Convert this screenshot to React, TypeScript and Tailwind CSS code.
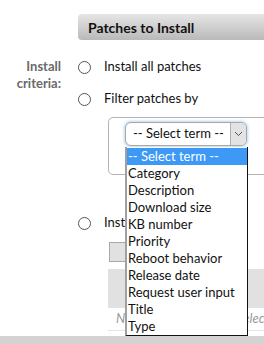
import { useState } from "react";

const terms = [
  "-- Select term --",
  "Category",
  "Description",
  "Download size",
  "KB number",
  "Priority",
  "Reboot behavior",
  "Release date",
  "Request user input",
  "Title",
  "Type",
];

function Radio() {
  return <span className="block w-[13px] h-[13px] rounded-full border border-[#555] bg-white shrink-0" />;
}

export default function App() {
  const [active] = useState(0);

  return (
    <div
      className="relative w-[264px] h-[344px] overflow-hidden bg-white text-[13px] text-[#111]"
      style={{ fontFamily: 'Lato, "Open Sans", sans-serif' }}
    >
      <div className="pt-[14px]">
        {/* Header */}
        <div className="ml-[78px] h-[26px] rounded-l-[4px] bg-gradient-to-b from-[#e6e6e6] to-[#b9b9b9] flex items-center pl-[10px]">
          <span className="text-[14px] font-bold text-[#111]">Patches to Install</span>
        </div>

        <div className="flex">
          {/* Label */}
          <div className="w-[78px] shrink-0 pr-[17px] pt-[18px] text-right text-[#6a6a6a] font-bold leading-[17px]">
            Install
            <br />
            criteria:
          </div>

          {/* Content */}
          <div className="flex-1 min-w-0 pt-[18px]">
            <div className="h-[18px] flex items-center gap-[13px]">
              <Radio />
              <span>Install all patches</span>
            </div>
            <div className="mt-[14px] h-[18px] flex items-center gap-[13px]">
              <Radio />
              <span>Filter patches by</span>
            </div>

            <div className="mt-[9px] ml-[30px] mr-[-20px] h-[58px] border border-[#b4b4b4] rounded-[5px] pl-[16px] pt-[4px]">
              <div className="relative w-[122px]">
                <div className="h-[24px] flex items-center border border-[#a8a8a8] rounded-[6px] bg-white shadow-[0_0_3px_1px_#b7d7f5] overflow-hidden">
                  <span className="flex-1 pl-[7px] whitespace-nowrap">-- Select term --</span>
                  <span className="w-[16px] h-full bg-[#e3e3e3] border-l border-[#b0b0b0] flex items-center justify-center">
                    <svg width="9" height="6" viewBox="0 0 9 6" fill="none" stroke="#555" strokeWidth="1">
                      <path d="M1 1l3.5 3.5L8 1" />
                    </svg>
                  </span>
                </div>
                <ul className="absolute left-0 top-[25px] z-10 w-[123px] h-[189px] bg-white border-l-2 border-l-[#a0a0a0] border-r border-b border-r-[#111] border-b-[#111] pt-[1px]">
                  {terms.map((t, i) => (
                    <li
                      key={t}
                      className={
                        "h-[17px] leading-[17px] pl-[1px] whitespace-nowrap " +
                        (i === active ? "bg-[#3d99f5] text-white" : "text-[#111]")
                      }
                    >
                      {t}
                    </li>
                  ))}
                </ul>
              </div>
            </div>

            <div className="mt-[39px] h-[18px] flex items-center gap-[13px]">
              <Radio />
              <span className="whitespace-nowrap">Install selected patches</span>
            </div>

            <div className="mt-[10px] ml-[31px] w-[90px] h-[20px] border border-[#a8a8a8] bg-[#e1e1e1]" />

            <div className="mt-[7px] ml-[30px] h-[39px] bg-[#e1e1e1]" />
            <div className="ml-[30px] h-[23px] border-b border-[#e4e4e4] pl-[8px] flex items-center italic text-[#9a9a9a] whitespace-nowrap overflow-hidden">
              No patches have been selected
            </div>
          </div>
        </div>
      </div>

      {/* Bottom bar */}
      <div className="absolute left-0 right-0 bottom-0 h-[8px] bg-[#d3d3d3]" />
    </div>
  );
}
